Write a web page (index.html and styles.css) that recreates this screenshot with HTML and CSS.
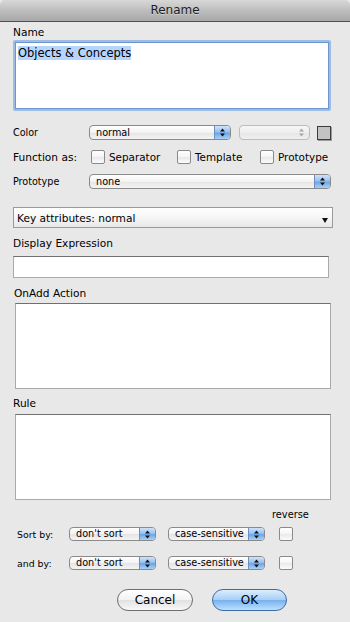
FILE: index.html
```html
<!DOCTYPE html>
<html lang="en">
<head>
    <meta charset="UTF-8">
    <title>Rename</title>
    <link rel="stylesheet" href="styles.css">
</head>
<body>
    <div class="window">
        <div class="titlebar">Rename</div>

        <div class="panel">
            <div class="label">Name</div>
            <div class="name-field"><span class="selected">Objects &amp; Concepts</span></div>

            <div class="attr-row row-color">
                <span class="row-label small">Color</span>
                <div class="popup popup-color">
                    <span class="popup-text">normal</span>
                    <span class="arrows"><svg width="7" height="9" viewBox="0 0 7 9"><path d="M3.5 0.5L6 3.6H1Z M1 5.4H6L3.5 8.5Z" fill="#111"/></svg></span>
                </div>
                <div class="popup popup-disabled">
                    <span class="popup-text"></span>
                    <span class="arrows"><svg width="7" height="9" viewBox="0 0 7 9"><path d="M3.5 0.5L6 3.6H1Z M1 5.4H6L3.5 8.5Z" fill="#a8a8a8"/></svg></span>
                </div>
                <div class="swatch"></div>
            </div>

            <div class="attr-row row-function">
                <span class="row-label">Function as:</span>
                <label class="check check-sep"><span class="box"></span>Separator</label>
                <label class="check check-tpl"><span class="box"></span>Template</label>
                <label class="check"><span class="box"></span>Prototype</label>
            </div>

            <div class="attr-row row-proto">
                <span class="row-label small">Prototype</span>
                <div class="popup popup-proto">
                    <span class="popup-text">none</span>
                    <span class="arrows"><svg width="7" height="9" viewBox="0 0 7 9"><path d="M3.5 0.5L6 3.6H1Z M1 5.4H6L3.5 8.5Z" fill="#111"/></svg></span>
                </div>
            </div>

            <div class="key-attrs">
                <span>Key attributes: normal</span>
                <span class="tri"></span>
            </div>

            <div class="label label-display">Display Expression</div>
            <div class="field field-line"></div>

            <div class="label label-onadd">OnAdd Action</div>
            <div class="field field-area"></div>

            <div class="label label-rule">Rule</div>
            <div class="field field-area field-rule"></div>

            <div class="reverse-label">reverse</div>
            <div class="sort-row">
                <span class="sort-label">Sort by:</span>
                <div class="popup popup-sort">
                    <span class="popup-text">don't sort</span>
                    <span class="arrows"><svg width="7" height="9" viewBox="0 0 7 9"><path d="M3.5 0.5L6 3.6H1Z M1 5.4H6L3.5 8.5Z" fill="#111"/></svg></span>
                </div>
                <div class="popup popup-case">
                    <span class="popup-text">case-sensitive</span>
                    <span class="arrows"><svg width="7" height="9" viewBox="0 0 7 9"><path d="M3.5 0.5L6 3.6H1Z M1 5.4H6L3.5 8.5Z" fill="#111"/></svg></span>
                </div>
                <span class="box sort-box"></span>
            </div>
            <div class="sort-row sort-row-2">
                <span class="sort-label">and by:</span>
                <div class="popup popup-sort">
                    <span class="popup-text">don't sort</span>
                    <span class="arrows"><svg width="7" height="9" viewBox="0 0 7 9"><path d="M3.5 0.5L6 3.6H1Z M1 5.4H6L3.5 8.5Z" fill="#111"/></svg></span>
                </div>
                <div class="popup popup-case">
                    <span class="popup-text">case-sensitive</span>
                    <span class="arrows"><svg width="7" height="9" viewBox="0 0 7 9"><path d="M3.5 0.5L6 3.6H1Z M1 5.4H6L3.5 8.5Z" fill="#111"/></svg></span>
                </div>
                <span class="box sort-box"></span>
            </div>

            <div class="buttons">
                <button type="button" class="btn">Cancel</button>
                <button type="button" class="btn btn-ok">OK</button>
            </div>
        </div>
    </div>
</body>
</html>
```

FILE: styles.css
```css
body {
    margin: 0;
    background-color: #e8e8e8;
    font-family: "DejaVu Sans", "Lucida Grande", sans-serif;
    color: #000;
}

.window {
    width: 350px;
    height: 622px;
    background-color: #e8e8e8;
    overflow: hidden;
}

.titlebar {
    height: 21px;
    line-height: 21px;
    text-align: center;
    font-size: 12px;
    color: #1c1c1c;
    text-shadow: 0 1px 0 rgba(255,255,255,0.4);
    background: linear-gradient(#d8d8d8, #bdbdbd 50%, #a8a8a8);
    border-bottom: 1px solid #505050;
    border-radius: 5px 5px 0 0;
}

.panel {
    padding: 4px 0 0 13px;
}

.label {
    font-size: 10.6px;
    line-height: 13px;
    height: 13px;
}

.name-field {
    margin-top: 1px;
    width: 318px;
    height: 71px;
    box-sizing: border-box;
    background: white;
    border: 2px solid #9dbde6;
    box-shadow: inset 0 0 0 1px #6b95cc;
    border-radius: 2px;
    padding: 5px 3px;
    font-size: 11.5px;
    line-height: 13px;
}

.selected {
    background-color: #b5d5ff;
}

/* attribute rows */

.attr-row {
    display: flex;
    align-items: center;
    height: 15px;
}

.row-color {
    margin-top: 14px;
}

.row-function {
    margin-top: 9px;
}

.row-proto {
    margin-top: 10px;
}

.row-label {
    width: 76px;
    flex-shrink: 0;
    font-size: 10.6px;
}

.row-label.small {
    font-size: 9.6px;
}

.popup {
    display: flex;
    align-items: stretch;
    height: 15px;
    box-sizing: border-box;
    border: 1px solid #8a8a8a;
    border-radius: 4px;
    overflow: hidden;
    background: linear-gradient(#fefefe, #f3f3f3 50%, #e4e4e4 51%, #f4f4f4);
    font-size: 9.7px;
    line-height: 13px;
}

.popup-text {
    flex: 1;
    padding-left: 6px;
    white-space: nowrap;
}

.arrows {
    width: 15px;
    display: flex;
    align-items: center;
    justify-content: center;
    border-left: 1px solid #6d8fbe;
    background: linear-gradient(#cfe3f9, #94bff0 48%, #6aa3e6 52%, #a9d1f7);
}

.popup-color {
    width: 142px;
}

.popup-disabled {
    width: 71px;
    margin-left: 8px;
    border-color: #bcbcbc;
    background: linear-gradient(#f6f6f6, #eeeeee 50%, #e6e6e6 51%, #efefef);
}

.popup-disabled .arrows {
    border-left: none;
    background: none;
}

.swatch {
    width: 14px;
    height: 14px;
    margin-left: 7px;
    box-sizing: border-box;
    background-color: #c3c3c3;
    border: 1px solid #3c3c3c;
    box-shadow: 1px 1px 0 #9a9a9a;
}

.popup-proto {
    width: 242px;
}

.check {
    display: flex;
    align-items: center;
    font-size: 10.4px;
}

.check-sep {
    width: 86px;
    margin-left: 2px;
}

.check-tpl {
    width: 83px;
}

.box {
    display: inline-block;
    width: 14px;
    height: 14px;
    margin-right: 4px;
    box-sizing: border-box;
    border: 1px solid #8a8a8a;
    border-radius: 2px;
    background: linear-gradient(#ffffff, #f4f4f4 50%, #e9e9e9 51%, #fbfbfb);
}

/* key attributes bar */

.key-attrs {
    margin-top: 18px;
    width: 320px;
    height: 21px;
    box-sizing: border-box;
    display: flex;
    align-items: center;
    padding: 0 4px 0 3px;
    border: 1px solid #9a9a9a;
    background: linear-gradient(#ffffff, #f6f6f6 50%, #e8e8e8);
    font-size: 10.6px;
}

.tri {
    margin-left: auto;
    margin-top: 5px;
    width: 0;
    height: 0;
    border-left: 3px solid transparent;
    border-right: 3px solid transparent;
    border-top: 5px solid #111;
}

/* text fields */

.field {
    background: white;
    box-sizing: border-box;
    border: 1px solid #aaaaaa;
    border-top-color: #707070;
}

.label-display {
    margin-top: 9px;
}

.field-line {
    margin-top: 6px;
    width: 316px;
    height: 22px;
}

.label-onadd {
    margin-top: 9px;
    padding-left: 1px;
}

.field-area {
    margin-top: 3px;
    margin-left: 2px;
    width: 316px;
    height: 86px;
}

.label-rule {
    margin-top: 8px;
}

.field-rule {
    margin-top: 4px;
}

/* sort rows */

.reverse-label {
    margin-top: 9px;
    margin-left: 259px;
    height: 12px;
    line-height: 12px;
    font-size: 9.8px;
}

.sort-row {
    margin-top: 6px;
    display: flex;
    align-items: center;
    height: 14px;
}

.sort-row-2 {
    margin-top: 15px;
}

.sort-label {
    width: 52px;
    padding-left: 4px;
    box-sizing: border-box;
    font-size: 9.4px;
}

.sort-row .popup {
    height: 14px;
    line-height: 12px;
}

.popup-sort {
    width: 87px;
    margin-left: 4px;
}

.popup-case {
    width: 97px;
    margin-left: 12px;
}

.sort-box {
    margin-left: 14px;
}

/* buttons */

.buttons {
    margin-top: 19px;
    padding-left: 104px;
    display: flex;
    gap: 19px;
}

.btn {
    width: 76px;
    height: 22px;
    padding: 0;
    border: 1px solid #6e6e6e;
    border-radius: 11px;
    background: linear-gradient(#ffffff, #f2f2f2 50%, #e1e1e1 51%, #f8f8f8);
    font-family: "DejaVu Sans", "Lucida Grande", sans-serif;
    font-size: 12px;
    color: #000;
}

.btn-ok {
    width: 75px;
    border-color: #3f6aa6;
    background: linear-gradient(#dbeefd, #a9cff6 48%, #78b1ee 52%, #bde0fd);
}
```
